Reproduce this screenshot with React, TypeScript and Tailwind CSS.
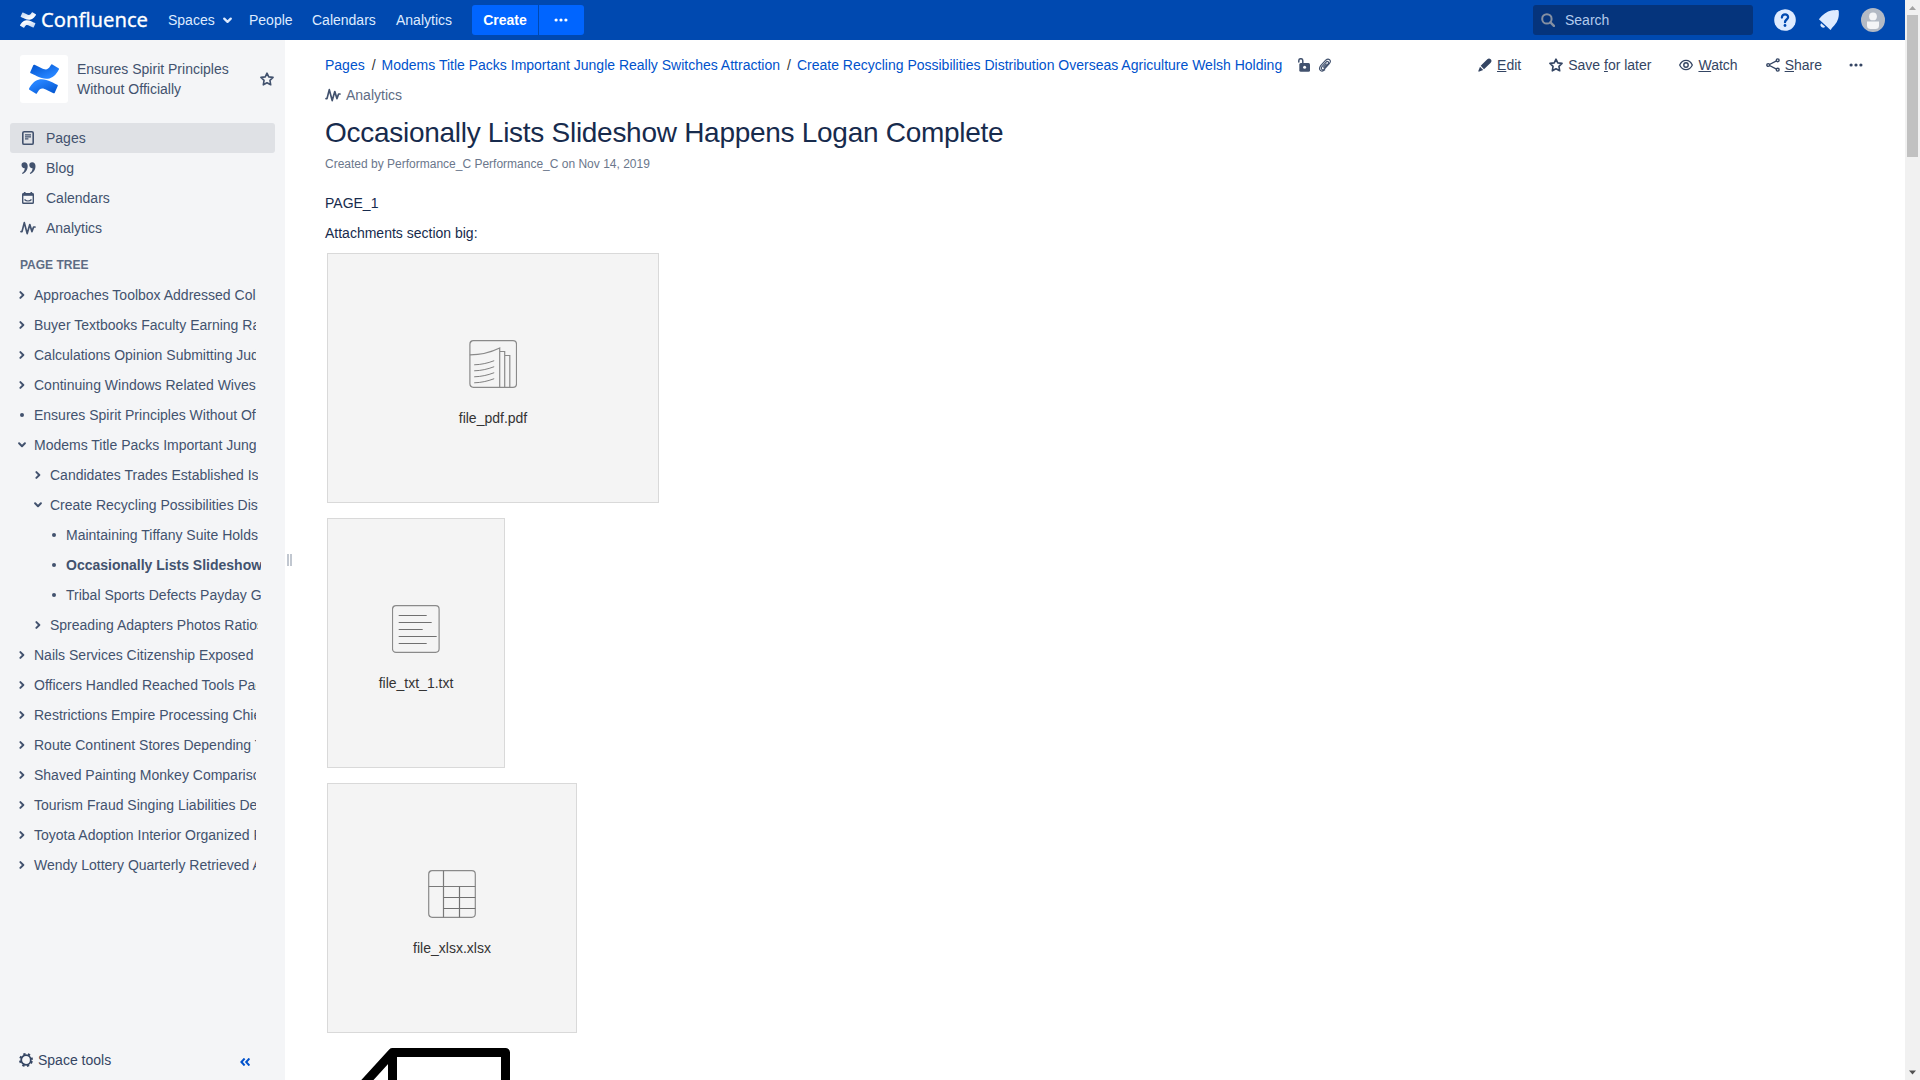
import React from "react";

type IconProps = { className?: string };

function ConfluenceMark({ className, id, from, to }: IconProps & { id: string; from: string; to: string }) {
  return (
    <svg viewBox="0 0 24 24" className={className}>
      <defs>
        <linearGradient id={id + "-b"} x1="1" y1="1" x2="0.3" y2="0.2">
          <stop offset="0" stopColor={from} />
          <stop offset="1" stopColor={to} />
        </linearGradient>
        <linearGradient id={id + "-t"} x1="0" y1="0" x2="0.7" y2="0.8">
          <stop offset="0" stopColor={from} />
          <stop offset="1" stopColor={to} />
        </linearGradient>
      </defs>
      <path
        fill={`url(#${id}-b)`}
        d="M.87 18.257c-.248.382-.53.875-.763 1.245a.764.764 0 0 0 .255 1.04l4.965 3.054a.764.764 0 0 0 1.058-.26c.199-.332.454-.763.733-1.221 1.967-3.247 3.945-2.853 7.508-1.146l4.957 2.337a.764.764 0 0 0 1.028-.382l2.364-5.346a.764.764 0 0 0-.382-1c-1.039-.49-3.105-1.467-4.965-2.361C10.911 10.97 5.224 11.185.87 18.257z"
      />
      <path
        fill={`url(#${id}-t)`}
        d="M23.131 5.743c.249-.405.531-.875.764-1.25a.764.764 0 0 0-.256-1.034L18.675.404a.764.764 0 0 0-1.058.26c-.195.335-.451.763-.734 1.225-1.966 3.246-3.945 2.85-7.508 1.146L4.437.694a.764.764 0 0 0-1.027.382L1.046 6.422a.764.764 0 0 0 .382 1c1.039.49 3.105 1.467 4.965 2.361 6.698 3.246 12.392 3.029 16.738-4.04z"
      />
    </svg>
  );
}

const ChevronDown = ({ className }: IconProps) => (
  <svg viewBox="0 0 8 6" className={className} fill="none" stroke="currentColor" strokeWidth="2" strokeLinecap="round" strokeLinejoin="round">
    <path d="M1.1 1.3 4 4.2l2.9-2.9" />
  </svg>
);

const ChevronRight = ({ className }: IconProps) => (
  <svg viewBox="0 0 6 8" className={className} fill="none" stroke="currentColor" strokeWidth="2" strokeLinecap="round" strokeLinejoin="round">
    <path d="M1.4 1.1 4.3 4 1.4 6.9" />
  </svg>
);

const Dots = ({ className }: IconProps) => (
  <svg viewBox="0 0 14 4" className={className} fill="currentColor">
    <circle cx="2.1" cy="2" r="1.6" />
    <circle cx="7" cy="2" r="1.6" />
    <circle cx="11.9" cy="2" r="1.6" />
  </svg>
);

const Star = ({ className }: IconProps) => (
  <svg viewBox="0 0 14 14" className={className} fill="none" stroke="currentColor" strokeWidth="1.6" strokeLinejoin="round">
    <path d="M7 1.1l1.75 3.75 4.3.55-3.1 2.9.75 4.5L7 10.7l-3.7 2.1.75-4.5L.95 5.4l4.3-.55z" />
  </svg>
);

const Wave = ({ className }: IconProps) => (
  <svg viewBox="0 0 16 14" className={className} fill="none" stroke="currentColor" strokeWidth="1.7" strokeLinecap="round" strokeLinejoin="round">
    <path d="M1 10.6h1L4.3 1.6l2.9 11 2.6-9 2.1 7 1.7-4.6h1.4" />
  </svg>
);

const PageIcon = () => (
  <svg viewBox="0 0 14 16" className="h-4 w-3.5" fill="none" stroke="currentColor">
    <rect x="1.8" y="1.7" width="10.4" height="12.6" rx="1.4" strokeWidth="1.6" />
    <path d="M4 4.9h6M4 6.9h6M4 8.9h3.4" strokeWidth="1.1" />
  </svg>
);

const QuoteIcon = () => (
  <svg viewBox="0 0 15 12" className="h-3 w-[15px]" fill="currentColor">
    <path d="M.5 3A2.9 2.9 0 0 1 3.4.2C5.300.2 6.700 1.700 6.700 4.100c0 4-2.200 7-5.200 7.900L1 11.100c1.600-.9 2.600-2.500 2.800-4.800C1.900 6.500.5 5 .5 3z" />
    <path d="M8.300 3a2.900 2.900 0 0 1 2.900-2.800c1.900 0 3.300 1.500 3.300 3.900 0 4-2.200 7-5.200 7.900l-.5-.9c1.600-.9 2.600-2.500 2.800-4.800C9.700 6.500 8.300 5 8.300 3z" />
  </svg>
);

const CalendarIcon = () => (
  <svg viewBox="0 0 14 14" className="size-3.5" fill="none" stroke="currentColor">
    <rect x="1.700" y="2.700" width="10.600" height="9.600" rx=".8" strokeWidth="1.400" />
    <path d="M1.500 3.600h11" strokeWidth="2.400" />
    <path d="M3.700 1v2M10.300 1v2" strokeWidth="1.700" />
    <path d="M3.500 8.500c1.800 2 5.200 2 7 0" strokeWidth="1.200" />
  </svg>
);

const Gear = () => (
  <svg viewBox="0 0 14 14" className="size-3.5" fill="none" stroke="currentColor">
    <circle cx="7" cy="7" r="4.800" strokeWidth="1.800" />
    <circle cx="7" cy="7" r="6.100" strokeWidth="1.800" strokeDasharray="2.300 2.490" strokeDashoffset="-1.250" />
  </svg>
);

const Pencil = () => (
  <svg viewBox="0 0 14 14" className="size-3.5" fill="currentColor">
    <path d="M9.300 1.300a2.500 2.500 0 0 1 3.400 0 2.500 2.500 0 0 1 0 3.400L6 11.200 2.700 7.800zM2 8.700l3.200 3.200-3.900 1.700a.7.7 0 0 1-.9-.9z" />
  </svg>
);

const Eye = () => (
  <svg viewBox="0 0 14 14" className="size-3.5" fill="none" stroke="currentColor">
    <path d="M.7 7C2.200 3.700 4.400 2.300 7 2.300S11.800 3.700 13.300 7C11.800 10.300 9.600 11.700 7 11.700S2.200 10.300.7 7z" strokeWidth="1.300" />
    <circle cx="7" cy="7" r="2.200" strokeWidth="1.400" />
  </svg>
);

const ShareIcon = () => (
  <svg viewBox="0 0 14 14" className="size-3.5" fill="none" stroke="currentColor" strokeWidth="1.400">
    <path d="M2.500 7 11.500 2.400M2.500 7l9 4.600" />
    <circle cx="2.200" cy="7" r="1.400" fill="white" />
    <circle cx="11.700" cy="2.300" r="1.400" fill="white" />
    <circle cx="11.700" cy="11.700" r="1.400" fill="white" />
  </svg>
);

const Unlock = () => (
  <svg viewBox="0 0 14 14" className="size-3.5">
    <path d="M1.800 4V2.700a2 2 0 0 1 4 0V5.500" fill="none" stroke="currentColor" strokeWidth="1.500" strokeLinecap="round" />
    <rect x="2.300" y="4.900" width="10.700" height="8.800" rx="1.500" fill="currentColor" />
    <circle cx="7.600" cy="9.300" r="1.500" fill="white" />
  </svg>
);

const Clip = () => (
  <svg viewBox="0 0 14 14" className="size-3.5" fill="none" stroke="currentColor" strokeWidth="1.150" strokeLinecap="round">
    <path d="M6.200 10.200 10 5.900c1.400-1.700-.5-3.300-1.900-1.800L4 8.600c-1.700 2.300.5 4.200 2.400 2.500l4.900-5.400c2.800-3.500-.8-6-3.600-3.500L2.700 7.600c-3 4 .8 7.200 4 4.300" />
    <path d="M8.300 6 5.500 9.100" />
  </svg>
);

const Search = () => (
  <svg viewBox="0 0 14 14" className="size-3.5" fill="none" stroke="currentColor">
    <circle cx="5.900" cy="5.900" r="4.700" strokeWidth="2" />
    <path d="m9.400 9.400 3.500 3.500" strokeWidth="2.400" strokeLinecap="round" />
  </svg>
);

const PdfGlyph = () => (
  <svg viewBox="0 0 48 48" className="size-12" fill="none" stroke="#8a8a8a" strokeWidth="1.200">
    <rect x=".9" y=".7" width="46.600" height="46.600" rx="3.500" />
    <path d="M.9 14.800c11 0 20-2 29.800-6.800V47.300M30.700 11.500h5V47.300M35.700 15.500h5.100V47.300" />
    <path d="M5.200 24.800c7-.2 13-1.500 20-4.100M5.200 30.800c7-.2 13-1.500 20-4.100M5.200 36.800c7-.2 13-1.500 20-4.100M5.200 42.800c7-.2 13-1.500 20-4.100" stroke="#808080" strokeWidth="1" />
  </svg>
);

const TxtGlyph = () => (
  <svg viewBox="0 0 48 48" className="size-12" fill="none" stroke="#8a8a8a" strokeWidth="1.200">
    <rect x=".5" y=".7" width="46.600" height="46.600" rx="3.500" />
    <path d="M6.700 10.500h28M6.700 17.500h33M6.700 24.500h24M6.700 31.500h38M6.700 38.500h28" stroke="#707070" strokeWidth="1" />
  </svg>
);

const XlsGlyph = () => (
  <svg viewBox="0 0 48 48" className="size-12" fill="none" stroke="#8a8a8a" strokeWidth="1.200">
    <rect x=".7" y=".7" width="46.600" height="46.600" rx="3.500" />
    <path d="M.7 16.500h46.600M15.500.7v46.600" stroke="#7a7a7a" />
    <path d="M31.500 16.500v30.800M15.500 27.500h31.800M15.500 38.500h31.800" stroke="#707070" />
  </svg>
);

type Kind = "closed" | "open" | "leaf";
const tree: { label: string; level: 0 | 1 | 2; kind: Kind; current?: boolean }[] = [
  { label: "Approaches Toolbox Addressed Collins", level: 0, kind: "closed" },
  { label: "Buyer Textbooks Faculty Earning Rating", level: 0, kind: "closed" },
  { label: "Calculations Opinion Submitting Judge", level: 0, kind: "closed" },
  { label: "Continuing Windows Related Wives", level: 0, kind: "closed" },
  { label: "Ensures Spirit Principles Without Officially", level: 0, kind: "leaf" },
  { label: "Modems Title Packs Important Jungle", level: 0, kind: "open" },
  { label: "Candidates Trades Established Issues", level: 1, kind: "closed" },
  { label: "Create Recycling Possibilities Distribution", level: 1, kind: "open" },
  { label: "Maintaining Tiffany Suite Holds", level: 2, kind: "leaf" },
  { label: "Occasionally Lists Slideshow Happens", level: 2, kind: "leaf", current: true },
  { label: "Tribal Sports Defects Payday Gallery", level: 2, kind: "leaf" },
  { label: "Spreading Adapters Photos Ratios", level: 1, kind: "closed" },
  { label: "Nails Services Citizenship Exposed", level: 0, kind: "closed" },
  { label: "Officers Handled Reached Tools Pack", level: 0, kind: "closed" },
  { label: "Restrictions Empire Processing Chief", level: 0, kind: "closed" },
  { label: "Route Continent Stores Depending Through", level: 0, kind: "closed" },
  { label: "Shaved Painting Monkey Comparison", level: 0, kind: "closed" },
  { label: "Tourism Fraud Singing Liabilities Delay", level: 0, kind: "closed" },
  { label: "Toyota Adoption Interior Organized Rings", level: 0, kind: "closed" },
  { label: "Wendy Lottery Quarterly Retrieved April", level: 0, kind: "closed" },
];
const levelClass = ["ml-4 w-[240px]", "ml-8 w-[226px]", "ml-12 w-[213px]"];

const navItems = [
  { label: "Pages", icon: <PageIcon />, active: true },
  { label: "Blog", icon: <QuoteIcon /> },
  { label: "Calendars", icon: <CalendarIcon /> },
  { label: "Analytics", icon: <Wave className="h-3.5 w-4" /> },
];

function Header() {
  return (
    <header className="flex h-10 w-full shrink-0 items-center bg-[#0049b0] text-[#deebff]">
      <div className="ml-5 flex w-[148px] items-center">
        <ConfluenceMark id="hdr" from="#b9d0f0" to="#ffffff" className="mr-[5px] size-4" />
        <svg className="h-10 w-[108px]" viewBox="0 0 108 40">
          <text x="0" y="26.500" textLength="107" lengthAdjust="spacingAndGlyphs" fontSize="20.500" fill="#fff" stroke="#fff" strokeWidth=".3" fontFamily="'Noto Sans', sans-serif">
            Confluence
          </text>
        </svg>
      </div>
      <div className="flex w-[81px] items-center">
        Spaces
        <ChevronDown className="ml-2 h-[7px] w-[9px]" />
      </div>
      <span className="w-[63px]">People</span>
      <span className="w-[84px]">Calendars</span>
      <span className="w-[76px]">Analytics</span>
      <button className="flex h-[30px] w-[66px] items-center justify-center rounded-l-[3px] bg-[#0065ff] font-bold text-white">Create</button>
      <button className="ml-px flex h-[30px] w-[45px] items-center justify-center rounded-r-[3px] bg-[#0065ff] pr-0.5 text-white">
        <Dots className="h-1 w-3.5" />
      </button>
      <div className="mr-[21px] ml-auto flex h-[30px] w-[220px] items-center rounded-[3px] bg-[#05347c] pl-2">
        <span className="text-[#8590a2]">
          <Search />
        </span>
        <span className="ml-2.5 text-[#b3cbed]">Search</span>
      </div>
      <svg viewBox="0 0 22 22" className="size-[22px]">
        <circle cx="11" cy="11" r="10.800" fill="#deebff" />
        <path d="M7.900 8.600C7.900 4.100 14.300 4.500 14.100 8.300c-.1 2.200-3.100 2.300-3.100 4.900" fill="none" stroke="#0049b0" strokeWidth="2.300" strokeLinecap="round" />
        <circle cx="11" cy="16.500" r="1.400" fill="#0049b0" />
      </svg>
      <svg viewBox="0 0 22 22" className="ml-[22px] size-[22px]" fill="#deebff">
        <path d="M.9 10.300C4.500 5.500 9 2.300 13.300 1.500c2.500-.5 4.500-.4 6.500-.6l.4.400c.9.700.5 1.500.6 2 .5 6-1.800 10.700-6 14.700-.8.800-1.400 1.500-1.800 2.600L12.500 21z" />
        <path d="M3.200 14.200a2.400 2.400 0 1 0 4 3.500z" />
      </svg>
      <svg viewBox="0 0 24 24" className="mr-5 ml-[21px] size-6">
        <circle cx="12" cy="12" r="12" fill="#b3bac5" />
        <circle cx="12" cy="8.400" r="3.900" fill="#f4f5f7" />
        <path d="M6 13.500h12v4.200a3.500 3.500 0 0 1-3.500 3.300h-5A3.500 3.500 0 0 1 6 17.700z" fill="#f4f5f7" />
      </svg>
    </header>
  );
}

function Sidebar() {
  return (
    <aside className="flex h-full w-[285px] shrink-0 flex-col bg-[#f4f5f7] text-[#42526e]">
      <div className="mt-[15px] flex h-12 items-center pl-5">
        <div className="flex size-12 items-center justify-center rounded-[3px] bg-white">
          <ConfluenceMark id="space" from="#0052cc" to="#2684ff" className="size-[30px]" />
        </div>
        <p className="ml-[9px] w-[183px] leading-5">
          Ensures Spirit Principles
          <br />
          Without Officially
        </p>
        <Star className="size-3.5" />
      </div>
      <nav className="mt-5 ml-2.5 w-[265px]">
        {navItems.map((n) => (
          <div key={n.label} className={n.active ? "flex h-[30px] items-center rounded-[3px] bg-[#dfe1e5]" : "flex h-[30px] items-center"}>
            <span className="flex w-9 justify-center">{n.icon}</span>
            <span>{n.label}</span>
          </div>
        ))}
      </nav>
      <h2 className="mt-3 ml-5 h-[25px] text-[12px] leading-[20px] font-bold text-[#5e6c84]">PAGE TREE</h2>
      <ul>
        {tree.map((t) => (
          <li key={t.label} className={"flex h-[30px] items-center overflow-hidden whitespace-nowrap " + levelClass[t.level]}>
            <span className="flex w-[18px] shrink-0 items-center pl-0.5">
              {t.kind === "closed" && <ChevronRight className="ml-px h-2 w-1.5" />}
              {t.kind === "open" && <ChevronDown className="h-[6px] w-[8px]" />}
              {t.kind === "leaf" && <span className="ml-0.5 size-1 rounded-full bg-[#42526e]" />}
            </span>
            <span className={t.current ? "font-bold" : ""}>{t.label}</span>
          </li>
        ))}
      </ul>
      <div className="mt-auto mb-[5px] flex h-[30px] items-center pl-[19px] text-[#344563]">
        <Gear />
        <span className="ml-[5px] w-[202px]">Space tools</span>
        <svg viewBox="0 0 10 8" className="mt-1 h-2 w-2.5 text-[#0052cc]" fill="none" stroke="currentColor" strokeWidth="2">
          <path d="M4.600.5 1.400 4l3.200 3.500M9.400.5 6.200 4l3.200 3.500" />
        </svg>
      </div>
    </aside>
  );
}

function Attachment({ className, name, children }: { className: string; name: string; children: React.ReactNode }) {
  return (
    <div className={"mb-[15px] ml-0.5 flex h-[250px] shrink-0 flex-col items-center border border-[#d9d9d9] bg-[#f4f4f4] pt-[86px] " + className}>
      {children}
      <span className="mt-5 leading-5 text-[#333333]">{name}</span>
    </div>
  );
}

function Main() {
  return (
    <main className="flex h-full min-w-0 flex-1 flex-col overflow-hidden pl-[32px] text-[#172b4d]">
      <div className="mt-[15px] flex h-5 shrink-0 items-center text-[#0052cc]">
        <span>Pages</span>
        <span className="mr-[6px] ml-[7px] text-[#333333]">/</span>
        <span>Modems Title Packs Important Jungle Really Switches Attraction</span>
        <span className="mr-[6px] ml-[7px] text-[#333333]">/</span>
        <span>Create Recycling Possibilities Distribution Overseas Agriculture Welsh Holding</span>
        <span className="ml-[15px] flex gap-[7px] text-[#42526e]">
          <Unlock />
          <Clip />
        </span>
        <div className="mr-[42px] ml-auto flex items-center text-[#344563]">
          <Pencil />
          <span className="ml-[5px]"><u>E</u>dit</span>
          <Star className="ml-7 size-3.5" />
          <span className="ml-[5px]">Save <u>f</u>or later</span>
          <span className="ml-7"><Eye /></span>
          <span className="ml-[5px]"><u>W</u>atch</span>
          <span className="ml-7"><ShareIcon /></span>
          <span className="ml-[5px]"><u>S</u>hare</span>
          <Dots className="ml-[27px] h-1 w-3.5" />
        </div>
      </div>
      <div className="mt-2.5 flex h-5 shrink-0 items-center text-[#5e6c84]">
        <Wave className="h-3.5 w-4 text-[#42526e]" />
        <span className="ml-[5px]">Analytics</span>
      </div>
      <h1 className="mt-3 h-8 shrink-0 text-[28px] leading-8 tracking-[-0.01em]">Occasionally Lists Slideshow Happens Logan Complete</h1>
      <p className="mt-[5px] h-5 shrink-0 text-[12px] leading-5 text-[#6b778c]">Created by Performance_C Performance_C on Nov 14, 2019</p>
      <p className="mt-[19px] h-5 shrink-0 leading-5">PAGE_1</p>
      <p className="mt-2.5 mb-2.5 h-5 shrink-0 leading-5">Attachments section big:</p>
      <Attachment className="w-[332px]" name="file_pdf.pdf"><PdfGlyph /></Attachment>
      <Attachment className="w-[178px]" name="file_txt_1.txt"><TxtGlyph /></Attachment>
      <Attachment className="w-[250px]" name="file_xlsx.xlsx"><XlsGlyph /></Attachment>
      <svg viewBox="0 0 200 32" className="h-8 w-[200px] shrink-0" fill="none" stroke="#000" strokeWidth="9" strokeLinejoin="round">
        <path d="M67.500 60V4.500L10 67.500M67.500 4.500H180.500V60" />
      </svg>
    </main>
  );
}

export default function App() {
  return (
    <div className="flex h-screen w-screen overflow-hidden bg-white font-['Liberation_Sans',Arial,sans-serif] text-[14px] leading-5">
      <div className="flex min-w-0 flex-1 flex-col">
        <Header />
        <div className="flex min-h-0 flex-1">
          <Sidebar />
          <div className="flex w-2 shrink-0 gap-px pt-[514px] pl-0.5">
            <span className="h-3 w-0.5 bg-[#c1c7d0]" />
            <span className="h-3 w-0.5 bg-[#c1c7d0]" />
          </div>
          <Main />
        </div>
      </div>
      <div className="flex w-[15px] shrink-0 flex-col items-center bg-[#f1f1f1]">
        <svg viewBox="0 0 15 15" className="size-[15px]"><path d="M4 10h7L7.500 6z" fill="#a3a3a3" /></svg>
        <span className="h-[142px] w-[11px] bg-[#c1c1c1]" />
        <svg viewBox="0 0 15 15" className="mt-auto size-[15px]"><path d="M4 5.500h7L7.500 9.500z" fill="#505050" /></svg>
      </div>
    </div>
  );
}
